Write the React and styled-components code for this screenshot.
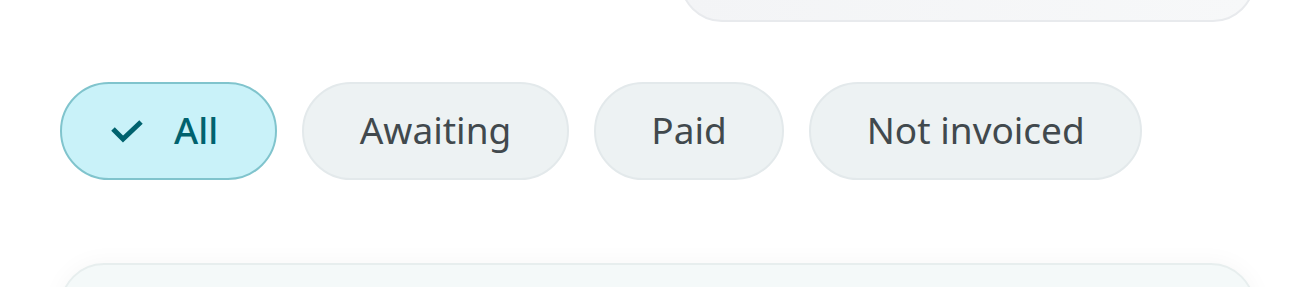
import React from 'react';
import styled, { createGlobalStyle } from 'styled-components';

const GlobalStyle = createGlobalStyle`
  html, body {
    margin: 0;
    padding: 0;
    background: #ffffff;
    font-family: "Noto Sans", "Open Sans", sans-serif;
    overflow: hidden;
  }
`;

const filters = ['All', 'Awaiting', 'Paid', 'Not invoiced'];

const App = () => {
    const [active, setActive] = React.useState('All');
    return (
        <Page>
            <GlobalStyle />
            <TopRow>
                <SummaryCard />
            </TopRow>
            <ChipRow>
                {filters.map((f) => (
                    <Chip key={f} $active={active === f} onClick={() => setActive(f)}>
                        {active === f && (
                            <svg width="34" height="24" viewBox="0 0 34 24" fill="none">
                                <path d="M3 10 L13 20 L31 3" stroke="currentColor" strokeWidth="5" />
                            </svg>
                        )}
                        <Label>{f}</Label>
                    </Chip>
                ))}
            </ChipRow>
            <ListCard />
        </Page>
    );
};

export default App;

const Page = styled.div`
    width: 1307px;
    height: 287px;
    box-sizing: border-box;
    padding: 0 52px 0 60px;
    display: flex;
    flex-direction: column;
    overflow: hidden;
`;

const TopRow = styled.div`
    display: flex;
    justify-content: flex-end;
    margin-top: -80px;
`;

const SummaryCard = styled.div`
    width: 575px;
    height: 102px;
    box-sizing: border-box;
    background: linear-gradient(90deg, #f3f4f6, #f7f8f9);
    border: 2px solid #e8eaed;
    border-radius: 42px;
`;

const ChipRow = styled.div`
    display: flex;
    gap: 25px;
    margin-top: 60px;
`;

const Chip = styled.button`
    height: 98px;
    box-sizing: border-box;
    display: flex;
    align-items: center;
    gap: ${(p) => (p.$active ? '30px' : '0')};
    padding: ${(p) => (p.$active ? '0 57px 0 48px' : '0 55.5px')};
    border-radius: 49px;
    border: 2px solid ${(p) => (p.$active ? '#80c4cd' : '#e3e9eb')};
    background: ${(p) => (p.$active ? '#c9f2f9' : '#edf2f3')};
    color: ${(p) => (p.$active ? '#00626e' : '#41494d')};
    font-family: "Noto Sans", "Open Sans", sans-serif;
    font-size: 37px;
    font-weight: ${(p) => (p.$active ? 500 : 400)};
    cursor: pointer;
    svg {
        flex: none;
    }
`;

const Label = styled.span`
    position: relative;
    top: -2px;
`;

const ListCard = styled.div`
    margin-top: 83px;
    height: 120px;
    flex: none;
    box-sizing: border-box;
    background: #f4f9f9;
    border: 2px solid #e7eeee;
    border-radius: 44px;
    box-shadow: 0 0 24px rgba(0, 0, 0, 0.04);
`;
